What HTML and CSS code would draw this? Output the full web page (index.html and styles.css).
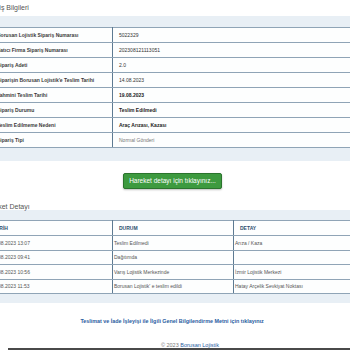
FILE: index.html
```html
<!DOCTYPE html>
<html lang="tr">
  <head>
    <meta charset="UTF-8" />
    <title>Sipariş Bilgileri</title>
    <link rel="stylesheet" href="styles.css">
  </head>
  <body>
    <div class="page">
      <h3 class="section-title">Sipariş Bilgileri</h3>
      <div class="panel">
        <table class="info-table">
          <tr><td class="label">Borusan Lojistik Sipariş Numarası</td><td>5022329</td></tr>
          <tr><td class="label">Satıcı Firma Sipariş Numarası</td><td>202308121113051</td></tr>
          <tr><td class="label">Sipariş Adeti</td><td>2.0</td></tr>
          <tr><td class="label">Siparişin Borusan Lojistik'e Teslim Tarihi</td><td>14.08.2023</td></tr>
          <tr><td class="label">Tahmini Teslim Tarihi</td><td class="strong">19.08.2023</td></tr>
          <tr><td class="label">Sipariş Durumu</td><td class="strong">Teslim Edilmedi</td></tr>
          <tr><td class="label">Teslim Edilmeme Nedeni</td><td class="strong">Araç Arızası, Kazası</td></tr>
          <tr><td class="label">Sipariş Tipi</td><td class="muted">Normal Gönderi</td></tr>
        </table>
      </div>

      <div class="btn-row">
        <button class="detail-btn">Hareket detayı için tıklayınız...</button>
      </div>

      <h3 class="section-title second">Hareket Detayı</h3>
      <div class="panel panel-small">
        <table class="move-table">
          <tr class="head"><th class="col-date">TARİH</th><th class="col-state">DURUM</th><th>DETAY</th></tr>
          <tr><td class="col-date">16.08.2023 13:07</td><td class="col-state">Teslim Edilmedi</td><td>Arıza / Kaza</td></tr>
          <tr><td class="col-date">16.08.2023 09:41</td><td class="col-state">Dağıtımda</td><td></td></tr>
          <tr><td class="col-date">15.08.2023 10:56</td><td class="col-state">Varış Lojistik Merkezinde</td><td>İzmir Lojistik Merkezi</td></tr>
          <tr><td class="col-date">14.08.2023 11:53</td><td class="col-state">Borusan Lojistik' e teslim edildi</td><td>Hatay Arçelik Sevkiyat Noktası</td></tr>
        </table>
      </div>

      <div class="info-link">
        <a href="#">Teslimat ve İade İşleyişi ile İlgili Genel Bilgilendirme Metni için tıklayınız</a>
      </div>

      <div class="footer">© 2023 <a href="#">Borusan Lojistik</a></div>
    </div>
    <div class="scrollbar"></div>
  </body>
</html>
```

FILE: styles.css
```css
body {
  margin: 0;
  background: #ffffff;
  color: #333;
  font-family: "Liberation Sans", Arial, sans-serif;
  overflow: hidden;
}
.page {
  margin-left: -20px;
  width: 420px;
}
.section-title {
  margin: 0;
  padding: 4px 0 0 3px;
  height: 12px;
  font-size: 7px;
  font-weight: normal;
  color: #555;
  line-height: 8px;
}
.section-title.second {
  padding-top: 10px;
  height: 7px;
}
.panel {
  background: #e8eff5;
  padding: 11px 0 13px 9px;
}
.panel-small {
  padding: 10px 0 9px 9px;
}
table {
  border-collapse: collapse;
  width: 100%;
  background: #fdfefe;
}
td,
th {
  height: 14px;
  padding: 0 6px;
  font-size: 5px;
  text-align: left;
  border-top: 1px solid #8fa4b6;
  border-bottom: 1px solid #8fa4b6;
  white-space: nowrap;
}
.info-table .label {
  width: 109px;
  padding-left: 8px;
  border-right: 1px solid #5d7a92;
  font-weight: bold;
  color: #3a3a3a;
}
.strong {
  font-weight: bold;
  color: #222;
}
.muted {
  color: #777;
}
.move-table th {
  font-weight: bold;
  color: #2f4f6f;
  border-right: 1px solid #5d7a92;
}
.move-table td {
  height: 13.5px;
  color: #555;
  border-right: 1px solid #5d7a92;
}
.move-table td.col-date {
  width: 115px;
  padding-left: 2px;
}
.move-table th.col-date {
  width: 113px;
  padding-left: 4px;
}
.move-table td.col-state {
  width: 113px;
  padding-left: 1px;
}
.move-table th.col-state {
  width: 108px;
}
.move-table td:nth-child(3) {
  padding-left: 1px;
}
.btn-row {
  padding: 8px 0 0 143px;
  height: 24px;
}
.detail-btn {
  width: 99px;
  height: 16px;
  padding: 0;
  background: #3d9a3f;
  border: 1px solid #2b742d;
  border-radius: 2px;
  box-shadow: 0 1px 2px rgba(0, 0, 0, 0.25);
  color: white;
  font-family: "Liberation Sans", Arial, sans-serif;
  font-size: 6.5px;
  cursor: pointer;
}
.info-link {
  padding: 11px 36px 0 0;
  text-align: center;
  height: 17px;
  line-height: 8px;
}
.info-link a {
  color: #2a5d9f;
  font-size: 5.4px;
  font-weight: bold;
  text-decoration: none;
}
.footer {
  padding-top: 11px;
  text-align: center;
  font-size: 5.5px;
  color: #777;
}
.footer a {
  color: #2a5d9f;
}
.scrollbar {
  position: fixed;
  left: 8px;
  right: 0;
  bottom: 0;
  height: 2px;
  background: #4a4a4a;
}
```
